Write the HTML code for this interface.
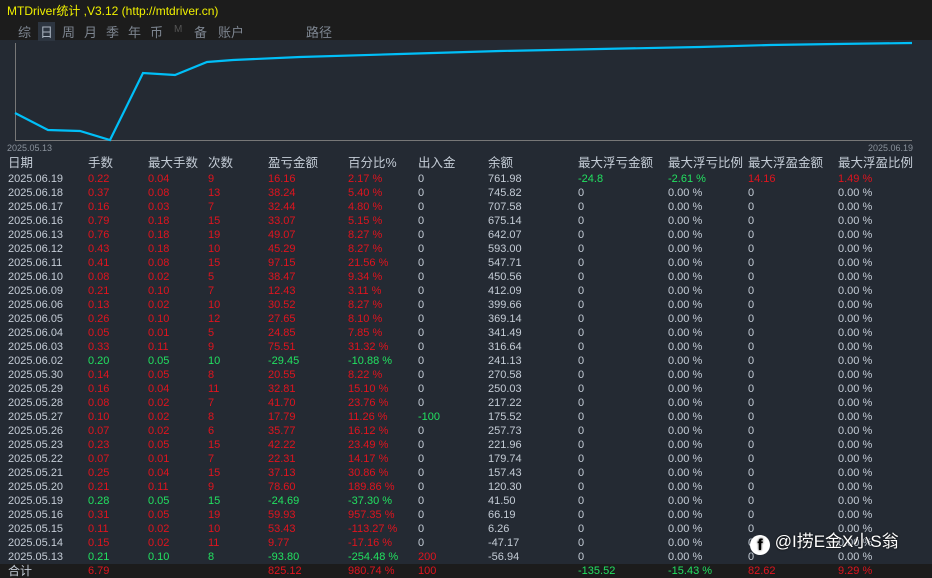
<!DOCTYPE html>
<html><head><meta charset="utf-8"><style>
body{margin:0;width:932px;height:578px;background:#242a33;overflow:hidden;font-family:"Liberation Sans","Noto Sans CJK SC",sans-serif;position:relative}
.top{position:absolute;left:0;top:0;width:932px;height:40px;background:#1c1c1c}
.title{position:absolute;left:7px;top:2px;font-size:12px;color:#f0f000}
.tabs{position:absolute;left:18px;top:22px;font-size:13px;color:#7d8590;letter-spacing:0}
.tabs span{position:absolute;top:0;white-space:nowrap}
.sel{background:#2d3540;color:#aab4c0}
.r{position:absolute;left:0;height:14px;font-size:11px;line-height:14px;width:932px}
.r span{position:absolute;top:0;white-space:nowrap}
.h{font-size:12.5px;color:#c4ccd6}
.w{color:#c4ccd6}.d{color:#e0141e}.g{color:#22e060}
.tot{position:absolute;left:0;top:564px;width:932px;height:14px;background:#1c1c1c}
</style></head><body>
<div class="top"></div>
<div class="title">MTDriver统计 ,V3.12 (http://mtdriver.cn)</div>
<div class="tabs">
<span style="left:0">综</span><span class="sel" style="left:21px;padding:0 2px;left:20px">日</span><span style="left:44px">周</span><span style="left:66px">月</span><span style="left:88px">季</span><span style="left:110px">年</span><span style="left:132px">币</span><span style="left:156px;font-size:10px;top:2px;color:#555">M</span><span style="left:176px">备</span><span style="left:200px">账户</span><span style="left:288px">路径</span>
</div>
<svg width="932" height="160" style="position:absolute;left:0;top:0">
<line x1="15" y1="140.5" x2="912" y2="140.5" stroke="#777" stroke-width="1"/>
<line x1="15.5" y1="43" x2="15.5" y2="140" stroke="#777" stroke-width="1"/>
<polyline fill="none" stroke="#00bff8" stroke-width="2.2" points="15,113 48,130 80,131 110,140 143,73 175,75 207,62 233,60 300,57 400,54 500,51 600,49 700,47 770,45 835,44 912,43"/>
<text x="7" y="151" font-size="9" fill="#8a929c" font-family="Liberation Sans">2025.05.13</text>
<text x="868" y="151" font-size="9" fill="#8a929c" font-family="Liberation Sans">2025.06.19</text>
</svg>
<div class="r h" style="top:156px"><span style="left:8px">日期</span><span style="left:88px">手数</span><span style="left:148px">最大手数</span><span style="left:208px">次数</span><span style="left:268px">盈亏金额</span><span style="left:348px">百分比%</span><span style="left:418px">出入金</span><span style="left:488px">余额</span><span style="left:578px">最大浮亏金额</span><span style="left:668px">最大浮亏比例</span><span style="left:748px">最大浮盈金额</span><span style="left:838px">最大浮盈比例</span></div>
<div id="rows"></div>
<div class="tot"></div>
<div class="r" style="top:564px"><span class="w" style="left:8px;font-size:12px">合计</span><span class="d" style="left:88px">6.79</span><span class="d" style="left:268px">825.12</span><span class="d" style="left:348px">980.74 %</span><span class="d" style="left:418px">100</span><span class="g" style="left:578px">-135.52</span><span class="g" style="left:668px">-15.43 %</span><span class="d" style="left:748px">82.62</span><span class="d" style="left:838px">9.29 %</span></div>
<div style="position:absolute;left:750px;top:527px;font-size:17px;color:#fff;white-space:nowrap;text-shadow:0 0 2px #000"><span style="display:inline-block;width:20px;height:20px;border-radius:50%;background:#fff;color:#000;font-weight:bold;text-align:center;line-height:22px;font-size:16px;vertical-align:-3px">f</span> @I捞E金X小S翁</div>
<script>
var D=[
["2025.06.19","0.22","0.04","9","16.16","2.17 %","0","761.98","-24.8","-2.61 %","14.16","1.49 %",0],
["2025.06.18","0.37","0.08","13","38.24","5.40 %","0","745.82"],
["2025.06.17","0.16","0.03","7","32.44","4.80 %","0","707.58"],
["2025.06.16","0.79","0.18","15","33.07","5.15 %","0","675.14"],
["2025.06.13","0.76","0.18","19","49.07","8.27 %","0","642.07"],
["2025.06.12","0.43","0.18","10","45.29","8.27 %","0","593.00"],
["2025.06.11","0.41","0.08","15","97.15","21.56 %","0","547.71"],
["2025.06.10","0.08","0.02","5","38.47","9.34 %","0","450.56"],
["2025.06.09","0.21","0.10","7","12.43","3.11 %","0","412.09"],
["2025.06.06","0.13","0.02","10","30.52","8.27 %","0","399.66"],
["2025.06.05","0.26","0.10","12","27.65","8.10 %","0","369.14"],
["2025.06.04","0.05","0.01","5","24.85","7.85 %","0","341.49"],
["2025.06.03","0.33","0.11","9","75.51","31.32 %","0","316.64"],
["2025.06.02","0.20","0.05","10","-29.45","-10.88 %","0","241.13",1],
["2025.05.30","0.14","0.05","8","20.55","8.22 %","0","270.58"],
["2025.05.29","0.16","0.04","11","32.81","15.10 %","0","250.03"],
["2025.05.28","0.08","0.02","7","41.70","23.76 %","0","217.22"],
["2025.05.27","0.10","0.02","8","17.79","11.26 %","-100","175.52"],
["2025.05.26","0.07","0.02","6","35.77","16.12 %","0","257.73"],
["2025.05.23","0.23","0.05","15","42.22","23.49 %","0","221.96"],
["2025.05.22","0.07","0.01","7","22.31","14.17 %","0","179.74"],
["2025.05.21","0.25","0.04","15","37.13","30.86 %","0","157.43"],
["2025.05.20","0.21","0.11","9","78.60","189.86 %","0","120.30"],
["2025.05.19","0.28","0.05","15","-24.69","-37.30 %","0","41.50",1],
["2025.05.16","0.31","0.05","19","59.93","957.35 %","0","66.19"],
["2025.05.15","0.11","0.02","10","53.43","-113.27 %","0","6.26"],
["2025.05.14","0.15","0.02","11","9.77","-17.16 %","0","-47.17"],
["2025.05.13","0.21","0.10","8","-93.80","-254.48 %","200","-56.94",1]];
var X=[8,88,148,208,268,348,418,488,578,668,748,838],h="";
D.forEach(function(r,i){
 var c=r.length>12?"":"";var gr=(r[8]===1)||(i==0?0:0);
 var green=(r[r.length-1]===1);
 var row=[r[0],r[1],r[2],r[3],r[4],r[5],r[6],r[7]];
 if(i==0)row=row.concat([r[8],r[9],r[10],r[11]]);else row=row.concat(["0","0.00 %","0","0.00 %"]);
 var cls=["w"];for(var k=1;k<6;k++)cls.push(green?"g":"d");
 cls.push(r[6]=="0"?"w":(r[6]=="200"?"d":"g"));cls.push("w");
 if(i==0)cls=cls.concat(["g","g","d","d"]);else cls=cls.concat(["w","w","w","w"]);
 h+='<div class="r" style="top:'+(171.5+i*14)+'px">';
 row.forEach(function(v,k){h+='<span class="'+cls[k]+'" style="left:'+X[k]+'px">'+v+'</span>'});
 h+='</div>';
});
document.getElementById("rows").innerHTML=h;
</script>
</body></html>
